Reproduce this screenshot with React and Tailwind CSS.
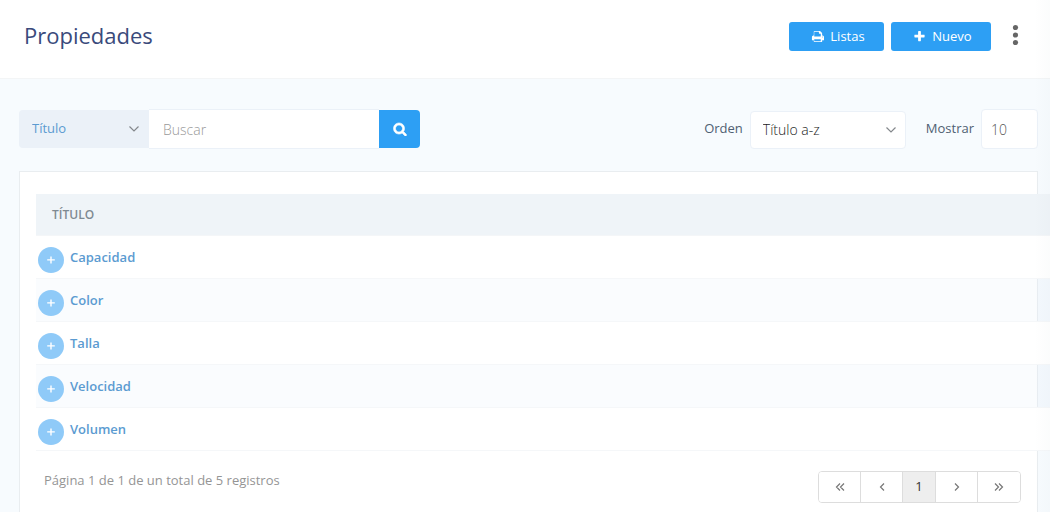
import React from "react";

const rows = ["Capacidad", "Color", "Talla", "Velocidad", "Volumen"];

function Glyph({ d, className }) {
  return (
    <svg viewBox="0 0 1792 1792" fill="currentColor" aria-hidden="true" className={className}>
      <path d={d} />
    </svg>
  );
}

const PRINT =
  "M448 1536h896v-256h-896v256zM448 896h896v-384h-160q-40 0-68-28t-28-68v-160h-640v640zM1664 960q0-26-19-45t-45-19-45 19-19 45 19 45 45 19 45-19 19-45zM1792 960v416q0 13-9.5 22.5t-22.5 9.5h-224v160q0 40-28 68t-68 28h-960q-40 0-68-28t-28-68v-160h-224q-13 0-22.5-9.5t-9.5-22.5v-416q0-79 56.5-135.5t135.5-56.5h64v-544q0-40 28-68t68-28h672q40 0 88 20t76 48l152 152q28 28 48 76t20 88v256h64q79 0 135.5 56.5t56.5 135.5z";
const PLUS =
  "M1600 736v192q0 40-28 68t-68 28h-416v416q0 40-28 68t-68 28h-192q-40 0-68-28t-28-68v-416h-416q-40 0-68-28t-28-68v-192q0-40 28-68t68-28h416v-416q0-40 28-68t68-28h192q40 0 68 28t28 68v416h416q40 0 68 28t28 68z";
const SEARCH =
  "M1216 832q0-185-131.5-316.5t-316.5-131.5-316.5 131.5-131.5 316.5 131.5 316.5 316.5 131.5 316.5-131.5 131.5-316.5zM1728 1664q0 52-38 90t-90 38q-54 0-90-38l-343-342q-179 124-399 124-143 0-273.5-55.5t-225-150-150-225-55.5-273.5 55.5-273.5 150-225 225-150 273.5-55.5 273.5 55.5 225 150 150 225 55.5 273.5q0 220-124 399l343 343q37 37 37 90z";

function SelectArrow() {
  return (
    <svg
      viewBox="0 0 10 6"
      fill="none"
      stroke="#84888c"
      strokeWidth="1.2"
      aria-hidden="true"
      className="pointer-events-none absolute top-4 right-[10px] h-[6px] w-[10px]"
    >
      <path d="M0.5 0.5 L5 5 L9.5 0.5" />
    </svg>
  );
}

function Angle({ d }) {
  return (
    <svg viewBox="0 0 10 10" fill="none" stroke="#777" strokeWidth="1.2" aria-hidden="true" className="size-[10px]">
      <path d={d} />
    </svg>
  );
}

function PageButton({ label, active, children }) {
  return (
    <button
      type="button"
      aria-label={label}
      aria-current={active ? "page" : undefined}
      className={
        active
          ? "flex w-[33px] items-center justify-center bg-[#eeeeee] text-[13px] text-[#333]"
          : "flex w-[42px] items-center justify-center bg-white text-[13px]"
      }
    >
      {children}
    </button>
  );
}

export default function App() {
  return (
    <div className="relative flex min-h-screen flex-col overflow-hidden bg-[#f7fbfe] font-['Open_Sans',sans-serif] text-[13px] text-[#4f6072]">
      <header className="flex h-[79px] items-start justify-between border-b border-[#f3f5f6] bg-white pr-[30px] pl-6">
        <h1 className="pt-5 text-[22px] leading-[30px] text-[#3a4a7b]">Propiedades</h1>
        <div className="flex items-center pt-[22px]">
          <button
            type="button"
            className="mr-[7px] flex h-[29px] w-[95px] items-center justify-center gap-[6px] rounded-[3px] bg-[#2d9ff4] pl-[3px] text-white"
          >
            <Glyph d={PRINT} className="size-[13px]" />
            Listas
          </button>
          <button
            type="button"
            className="flex h-[29px] w-[100px] items-center justify-center gap-[6px] rounded-[3px] bg-[#2d9ff4] pl-[3px] text-white"
          >
            <Glyph d={PLUS} className="size-[13px]" />
            Nuevo
          </button>
          <button type="button" aria-label="Más opciones" className="ml-5">
            <svg viewBox="0 0 9 26" fill="#666" aria-hidden="true" className="h-[26px] w-[9px]">
              <circle cx="4.5" cy="3.5" r="2.6" />
              <circle cx="4.5" cy="11" r="2.6" />
              <circle cx="4.5" cy="18.5" r="2.6" />
            </svg>
          </button>
        </div>
      </header>

      <main className="flex flex-1 flex-col pt-[30px] pr-3 pl-[19px]">
        <div className="flex items-center justify-between">
          <form className="flex items-center" onSubmit={(e) => e.preventDefault()}>
            <div className="relative">
              <select
                aria-label="Campo"
                className="block h-[38px] w-[130px] appearance-none rounded-l-[4px] bg-[#ebf1f8] pl-[13px] text-[#5b9bd1]"
              >
                <option>Título</option>
              </select>
              <SelectArrow />
            </div>
            <input
              type="text"
              aria-label="Buscar"
              placeholder="Buscar"
              className="h-10 w-[230px] border-y border-[#ebf1f8] bg-white pl-[14px] text-[14px] font-light placeholder:text-[#999]"
            />
            <button
              type="submit"
              aria-label="Buscar"
              className="flex h-[38px] w-[41px] items-center justify-center rounded-r-[4px] bg-[#2d9ff4] text-white"
            >
              <Glyph d={SEARCH} className="size-[14px] stroke-current stroke-[80]" />
            </button>
          </form>

          <div className="flex items-end">
            <label htmlFor="orden" className="mr-[7px] self-center">
              Orden
            </label>
            <div className="relative mr-5">
              <select
                id="orden"
                className="block h-[38px] w-[156px] appearance-none rounded-[4px] border border-[#ebf1f8] bg-white pb-px pl-3 text-[14px] font-light text-[#222]"
              >
                <option>Título a-z</option>
              </select>
              <SelectArrow />
            </div>
            <label htmlFor="mostrar" className="mr-[7px] self-center">
              Mostrar
            </label>
            <input
              id="mostrar"
              type="text"
              defaultValue="10"
              className="h-10 w-[57px] rounded-[4px] border border-[#ebf1f8] bg-white pl-[9px] text-[14px] font-light text-[#555]"
            />
          </div>
        </div>

        <section className="mt-[22px] flex-1 border border-b-0 border-[#e9edf0] bg-white px-4 pt-[22px] pb-[9px]">
          <div className="-mr-[29px]">
            <table className="w-full border-separate border-spacing-0 text-left">
              <thead>
                <tr>
                  <th className="h-[42px] border-b border-[#f4f6f8] bg-[#eff4f8] pl-4 text-[12px] font-semibold text-[#7f8a92]">
                    TÍTULO
                  </th>
                </tr>
              </thead>
              <tbody>
                {rows.map((name, i) => (
                  <tr key={name} className={i % 2 ? "bg-[#e8f1fb]/20" : "bg-white"}>
                    <td className="h-[43px] border-b border-[#f5f7f9] p-0 pl-[2px]">
                      <div className="flex items-center gap-[6px]">
                        <button
                          type="button"
                          aria-label={`Ver opciones de ${name}`}
                          className="mt-[5px] flex size-[26px] items-center justify-center rounded-full bg-[#8fcaf8] text-white"
                        >
                          <svg viewBox="0 0 8 8" fill="currentColor" aria-hidden="true" className="size-2">
                            <path d="M3.3 0.5h1.4v2.8h3.1v1.2h-3.1v3h-1.4v-3h-3.1v-1.2h3.1z" />
                          </svg>
                        </button>
                        <a href="#" className="pt-px font-semibold text-[#5b9bd1]">
                          {name}
                        </a>
                      </div>
                    </td>
                  </tr>
                ))}
              </tbody>
            </table>
          </div>

          <div className="mt-5 flex items-start justify-between pl-2">
            <p className="leading-[18px] text-[#959595]">Página 1 de 1 de un total de 5 registros</p>
            <nav
              aria-label="Paginación"
              className="flex h-8 divide-x divide-[#ddd] overflow-hidden rounded-[4px] border border-[#ddd]"
            >
              <PageButton label="Primera página">
                <Angle d="M5 1.5 L1.5 5 L5 8.5 M9 1.5 L5.5 5 L9 8.5" />
              </PageButton>
              <PageButton label="Página anterior">
                <Angle d="M7 1.5 L3.5 5 L7 8.5" />
              </PageButton>
              <PageButton active>1</PageButton>
              <PageButton label="Página siguiente">
                <Angle d="M3 1.5 L6.5 5 L3 8.5" />
              </PageButton>
              <PageButton label="Última página">
                <Angle d="M1 1.5 L4.5 5 L1 8.5 M5 1.5 L8.5 5 L5 8.5" />
              </PageButton>
            </nav>
          </div>
        </section>
      </main>
      <div className="pointer-events-none absolute inset-y-0 right-0 w-4 bg-linear-to-r from-transparent to-[#4a5a70]/2" />
    </div>
  );
}
